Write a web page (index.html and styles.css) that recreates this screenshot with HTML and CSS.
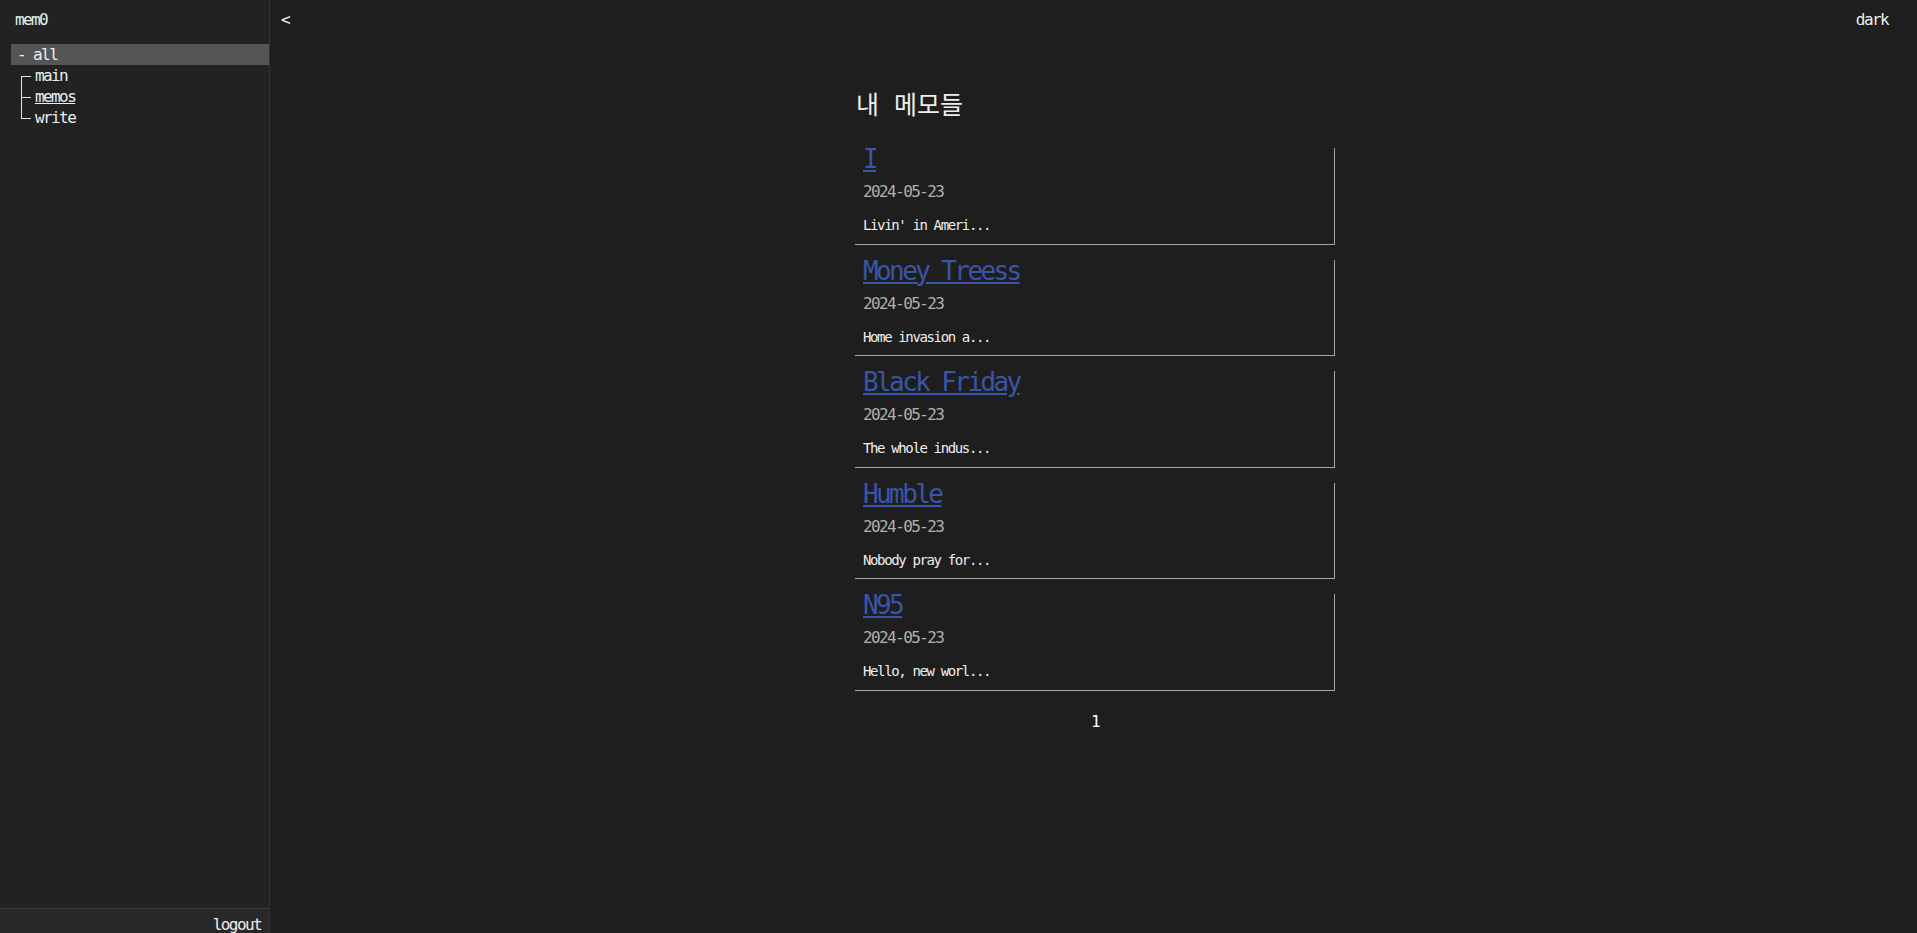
FILE: index.html
```html
<!DOCTYPE html>
<html lang="ko">
<head>
<meta charset="utf-8">
<title>mem0</title>
<link rel="stylesheet" href="styles.css">
</head>
<body>
<div class="app">
  <aside class="sidebar">
    <div class="brand">mem0</div>
    <nav class="tree">
      <div class="tree-root">- all</div>
      <ul class="tree-list">
        <li class="tree-item first"><a class="tree-link" href="#">main</a></li>
        <li class="tree-item mid"><a class="tree-link current" href="#">memos</a></li>
        <li class="tree-item last"><a class="tree-link" href="#">write</a></li>
      </ul>
    </nav>
    <div class="spacer"></div>
    <div class="sidebar-footer">logout</div>
  </aside>
  <main class="main">
    <header class="topbar">
      <span class="back">&lt;</span>
      <span class="theme">dark</span>
    </header>
    <section class="memos">
      <h1 class="page-title">내 메모들</h1>
      <article class="memo">
        <a class="memo-title" href="#">I</a>
        <div class="memo-date">2024-05-23</div>
        <p class="memo-text">Livin' in Ameri...</p>
      </article>
      <article class="memo">
        <a class="memo-title" href="#">Money Treess</a>
        <div class="memo-date">2024-05-23</div>
        <p class="memo-text">Home invasion a...</p>
      </article>
      <article class="memo">
        <a class="memo-title" href="#">Black Friday</a>
        <div class="memo-date">2024-05-23</div>
        <p class="memo-text">The whole indus...</p>
      </article>
      <article class="memo">
        <a class="memo-title" href="#">Humble</a>
        <div class="memo-date">2024-05-23</div>
        <p class="memo-text">Nobody pray for...</p>
      </article>
      <article class="memo">
        <a class="memo-title" href="#">N95</a>
        <div class="memo-date">2024-05-23</div>
        <p class="memo-text">Hello, new worl...</p>
      </article>
      <nav class="pager"><span class="page current-page">1</span></nav>
    </section>
  </main>
</div>
</body>
</html>
```

FILE: styles.css
```css
html, body {
  margin: 0;
  padding: 0;
  height: 100%;
}

body {
  background: #1e1e1e;
  color: #eeeeee;
  font-family: "DejaVu Sans Mono", "Noto Sans CJK KR", monospace;
  font-size: 16px;
  letter-spacing: -1.6px;
  overflow: hidden;
}

.app {
  display: flex;
  height: 100vh;
}

/* ---------- sidebar ---------- */
.sidebar {
  flex: none;
  width: 269px;
  background: #222222;
  border-right: 1px solid #353535;
  display: flex;
  flex-direction: column;
}

.brand {
  padding: 10px 15px 14px;
  line-height: 20px;
}

.tree-root {
  margin-left: 11px;
  background: #555555;
  height: 21px;
  line-height: 21px;
  padding-left: 6px;
}

.tree-list {
  list-style: none;
  margin: 0;
  padding: 0;
}

.tree-item {
  position: relative;
  height: 21px;
  line-height: 21px;
  padding-left: 35px;
}

.tree-item::before {
  content: "";
  position: absolute;
  left: 21px;
  top: 11px;
  width: 10px;
  border-top: 1px solid #e6e6e6;
}

.tree-item::after {
  content: "";
  position: absolute;
  left: 21px;
  border-left: 1px solid #e6e6e6;
}

.tree-item.first::after {
  top: 11px;
  bottom: 0;
}

.tree-item.mid::after {
  top: 0;
  bottom: 0;
}

.tree-item.last::after {
  top: 0;
  height: 12px;
}

.tree-link {
  color: #eeeeee;
  text-decoration: none;
}

.tree-link.current {
  text-decoration: underline;
}

.spacer {
  flex: 1;
}

.sidebar-footer {
  flex: none;
  box-sizing: border-box;
  height: 25px;
  overflow: hidden;
  border-top: 1px solid #3a3a3a;
  background: #282828;
  padding: 6px 8px 0;
  line-height: 20px;
  text-align: right;
}

/* ---------- main ---------- */
.main {
  flex: 1;
  display: flex;
  flex-direction: column;
  min-width: 0;
  padding-left: 3px;
}

.topbar {
  display: flex;
  justify-content: space-between;
  padding: 10px 29px 10px 8px;
  line-height: 20px;
}

.memos {
  width: 480px;
  margin: 0 auto;
}

.page-title {
  font-size: 25px;
  font-weight: normal;
  letter-spacing: 0;
  line-height: 32px;
  margin: 50px 0 26px 1px;
}

.memo {
  border-right: 1px solid #a5a5a5;
  border-bottom: 1px solid #a5a5a5;
  padding: 0 8px 9.5px;
  margin-bottom: 15px;
}

.memo-title {
  display: block;
  width: max-content;
  font-size: 26px;
  letter-spacing: -2.6px;
  line-height: 22px;
  color: #3a55a7;
  text-decoration: underline;
  text-decoration-thickness: 2px;
  text-underline-offset: 2px;
}

.memo-date {
  margin-top: 12px;
  line-height: 20px;
  color: #b0b0b0;
}

.memo-text {
  margin: 14px 0 0;
  font-size: 14px;
  letter-spacing: -1.37px;
  line-height: 18px;
}

.pager {
  margin-top: 21px;
  text-align: center;
  line-height: 20px;
}

.page {
  color: #ffffff;
}
```
